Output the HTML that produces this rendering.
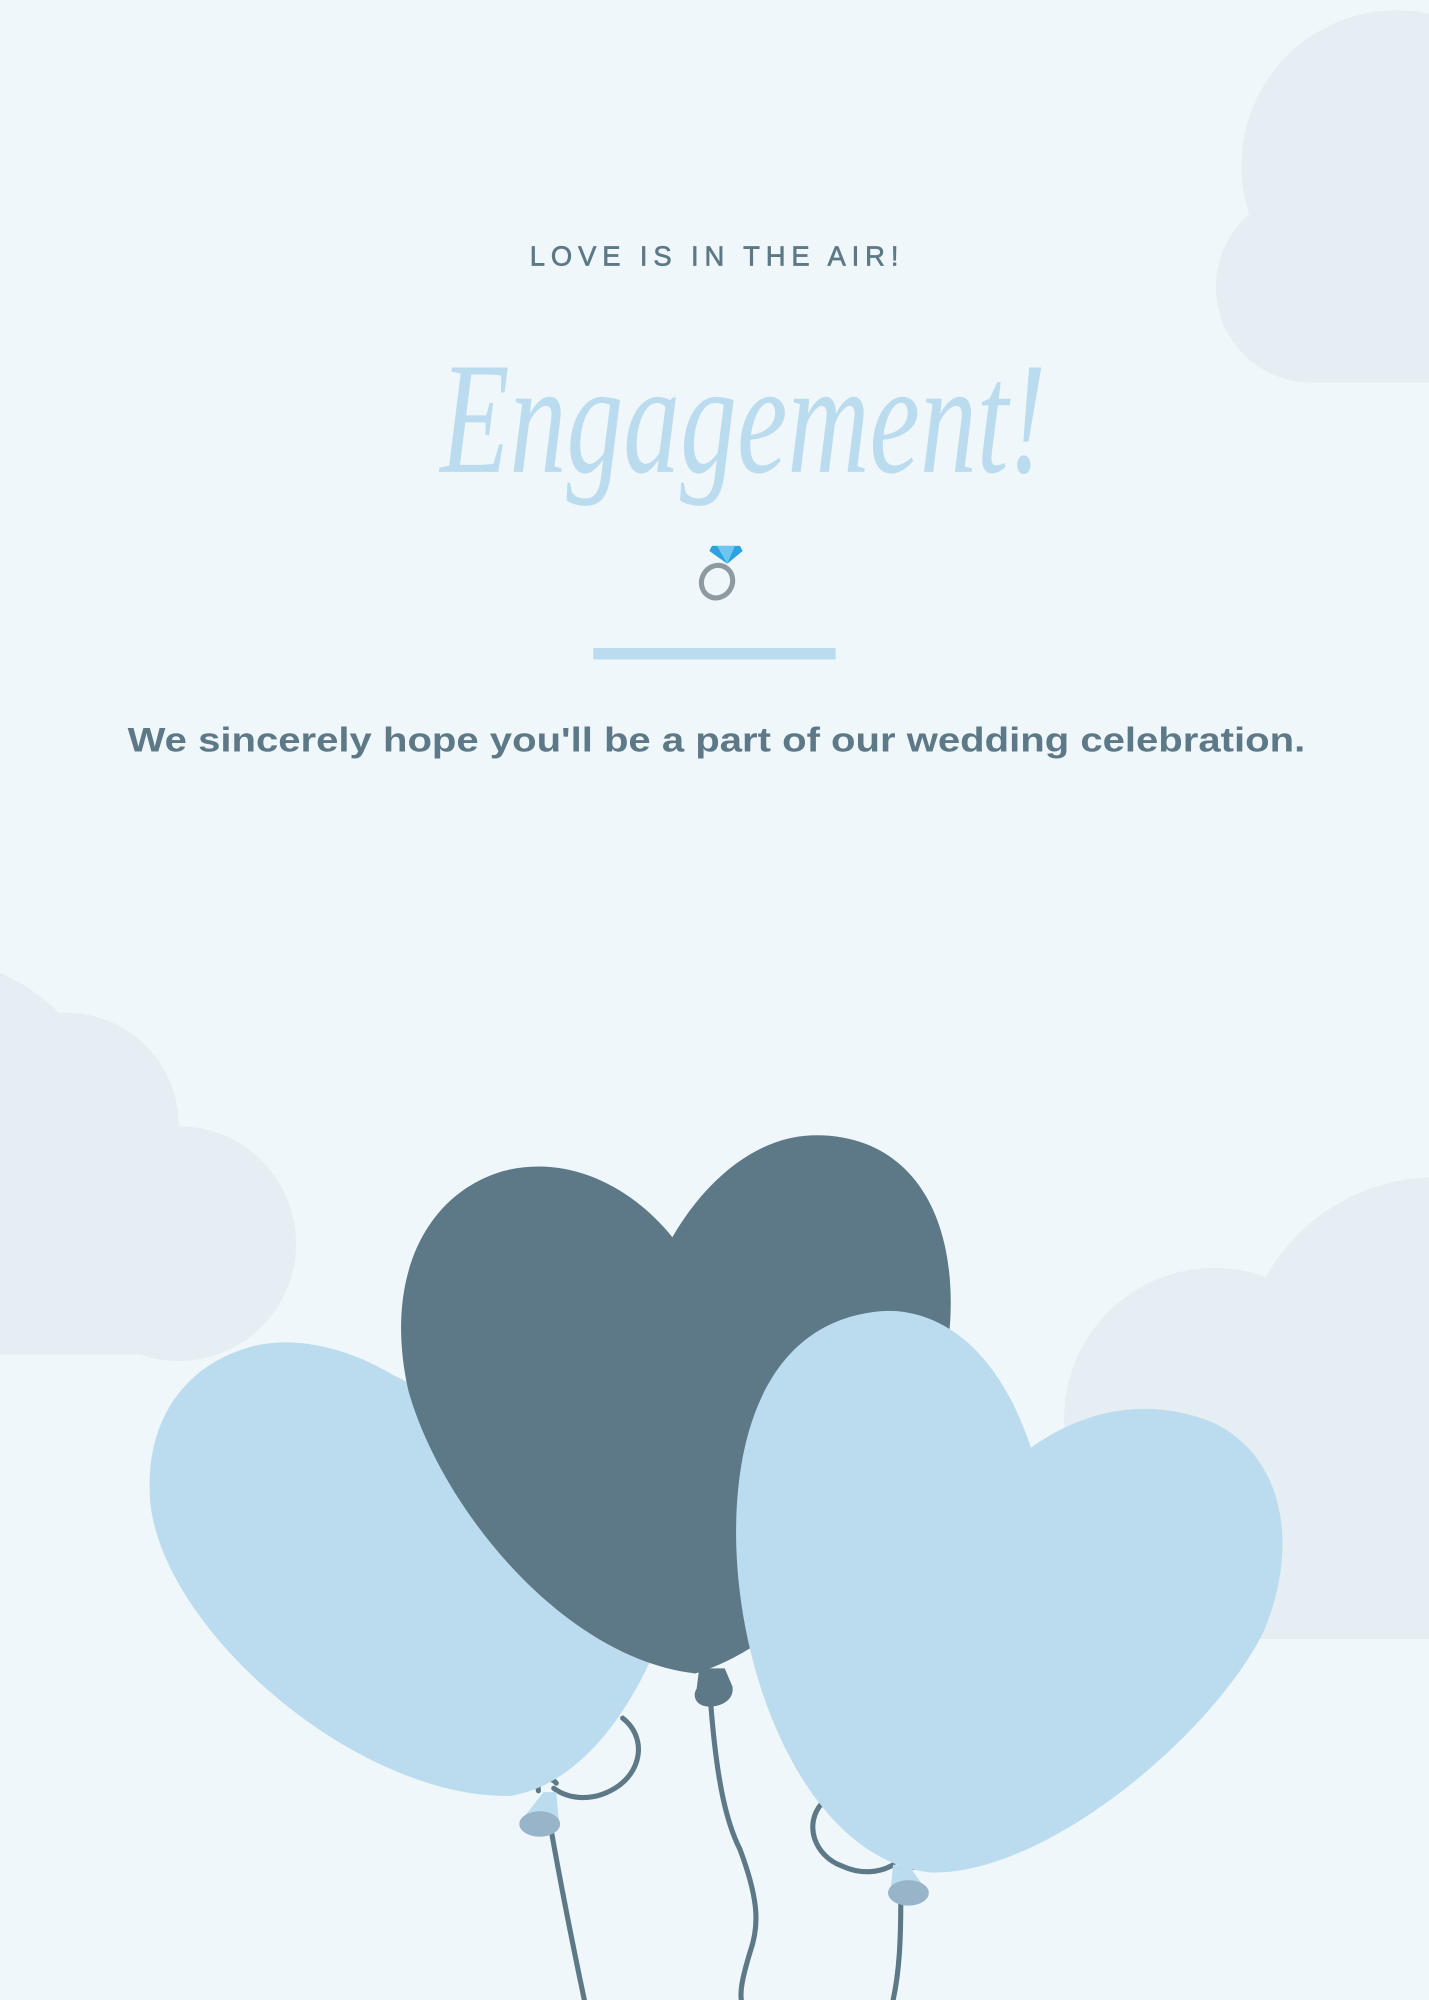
<!DOCTYPE html>
<html><head><meta charset="utf-8"><style>
html,body{margin:0;padding:0;background:#eff7fa;}
svg{display:block}
</style></head><body>
<svg width="1429" height="2000" viewBox="0 0 1120 1568" preserveAspectRatio="none" xmlns="http://www.w3.org/2000/svg">
<rect width="1120" height="1568" fill="#eff7fa"/>
<g fill="#e5eef2">
 <circle cx="1095" cy="130" r="122"/>
 <circle cx="1028" cy="225" r="75"/>
 <rect x="1028" y="150" width="92" height="150"/>
 <circle cx="-60" cy="900" r="150"/>
 <circle cx="52" cy="882" r="88"/>
 <circle cx="140" cy="975" r="92"/>
 <rect x="0" y="880" width="140" height="182"/>
 <circle cx="1125" cy="1075" r="152"/>
 <circle cx="952" cy="1112" r="118"/>
 <rect x="952" y="1075" width="168" height="210"/>
</g>
<text x="562" y="208" text-anchor="middle" font-family="Liberation Sans, sans-serif" font-size="21.5" letter-spacing="4.6" stroke="#5d7887" stroke-width="0.5" fill="#5d7887">LOVE IS IN THE AIR!</text>
<text x="345" y="370" textLength="475" lengthAdjust="spacingAndGlyphs" font-family="Liberation Serif, serif" font-style="italic" font-size="125" fill="#bbdcee">Engagement!</text>
<g>
 <polygon points="558,428 580,428 582,432 570,442 556,432" fill="#2aa3e0"/>
 <polygon points="562,428 576,428 570,442" fill="#6cc6f0"/>
 <ellipse cx="562" cy="456" rx="12" ry="13" fill="none" stroke="#8e9aa0" stroke-width="4" transform="rotate(30 562 456)"/>
</g>
<rect x="465" y="508" width="190" height="9" fill="#bbdcee"/>
<text x="100" y="589" textLength="923" lengthAdjust="spacingAndGlyphs" font-family="Liberation Sans, sans-serif" font-weight="bold" font-size="27" fill="#5d7887">We sincerely hope you'll be a part of our wedding celebration.</text>
<g fill="none" stroke="#5d7887" stroke-width="4" stroke-linecap="round">
 <path d="M432,1435 C440,1480 450,1530 458,1568"/>
 <path d="M557,1335 C562,1400 570,1430 580,1450 C595,1490 595,1510 588,1530 C582,1550 580,1560 581,1568"/>
 <path d="M706,1490 C706,1520 705,1545 700,1568"/>
 <path d="M488,1347 C505,1360 505,1385 485,1400 C465,1414 445,1410 434,1402 M422,1404 C420,1395 432,1392 436,1398"/>
 <path d="M644,1414 C630,1430 638,1455 660,1463 C675,1470 690,1468 700,1462 M705,1458 C708,1452 718,1454 716,1464"/>
</g>
<path d="M308,1078 C270,1055 230,1048 200,1055 C140,1070 112,1120 118,1180 C130,1280 280,1410 400,1408 C450,1400 490,1350 515,1290 C520,1250 360,1100 308,1078Z" fill="#bbdcee"/>
<path d="M527,970 C550,930 590,890 640,890 C705,890 748,940 745,1030 C742,1130 650,1280 545,1312 C440,1300 345,1180 320,1090 C300,1000 335,935 395,918 C445,905 495,930 527,970Z" fill="#5d7887"/>
<path d="M548,1308 L568,1308 L574,1322 C576,1332 566,1338 556,1338 C546,1338 542,1330 546,1324Z" fill="#5d7887"/>
<path d="M808,1135 C780,1050 730,1025 690,1028 C610,1035 575,1110 577,1210 C580,1330 640,1460 730,1468 C820,1470 950,1360 990,1280 C1020,1210 1005,1140 950,1115 C900,1095 850,1105 808,1135Z" fill="#bbdcee"/>
<polygon points="426,1405 436,1405 438,1428 408,1428" fill="#bbdcee"/>
<ellipse cx="423" cy="1430" rx="16" ry="10" fill="#97b4c8"/>
<polygon points="700,1462 712,1462 726,1482 698,1482" fill="#bbdcee"/>
<ellipse cx="712" cy="1484" rx="16" ry="10" fill="#97b4c8"/>
</svg>
</body></html>
